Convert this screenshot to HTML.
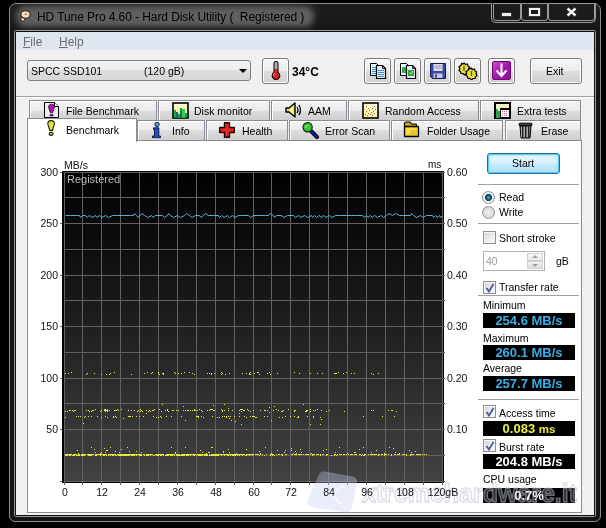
<!DOCTYPE html>
<html><head><meta charset="utf-8">
<style>
*{margin:0;padding:0;box-sizing:border-box}
html,body{width:606px;height:528px;overflow:hidden;background:#000}
body{position:relative;font-family:"Liberation Sans",sans-serif;font-size:11px;color:#000}
.a{position:absolute}
.t{position:absolute;white-space:nowrap;line-height:1;will-change:transform}
#frame{left:9px;top:3px;width:592px;height:519px;border:1px solid #8e8e8e;border-radius:7px 7px 6px 6px;background:linear-gradient(#1e1e1e 0px,#1a1a1a 14px,#161616 28px,#141414 60px)}
#glow{left:16px;top:6px;width:298px;height:21px;border-radius:9px;background:#606060;filter:blur(3px)}
#cap{left:491px;top:3px;width:105px;height:20px;border:1px solid #9a9a9a;border-top:none;border-radius:0 0 5px 5px;background:#1c1c1c}
#client1{left:14px;top:30px;width:582px;height:487px;border:1px solid #9a9a9a;border-radius:2px}
#client2{left:15px;top:31px;width:580px;height:485px;border:1px solid #0e0e0e;background:#f0f0f0}
#menu{left:16px;top:32px;width:578px;height:18px;background:#dfe6ef}
.btn{position:absolute;width:27px;height:26px;border:1px solid #7c7c7c;border-radius:3px;background:linear-gradient(#f6f6f6 0%,#ebebeb 48%,#dddddd 52%,#d0d0d0 100%);box-shadow:inset 0 0 0 1px #fcfcfc}
.tab{position:absolute;height:20px;border:1px solid #898c95;border-bottom:none;background:linear-gradient(#f2f2f2 0%,#ebebeb 50%,#dddddd 50%,#cfcfcf 100%);box-shadow:inset 1px 1px 0 #fff}
.tab span{position:absolute;top:5px;white-space:nowrap;line-height:1;font-size:10.5px;will-change:transform}
.lab{position:absolute;white-space:nowrap;line-height:1;font-size:10.5px;color:#111;margin-top:-1px;z-index:3;will-change:transform}
.vbox{position:absolute;left:483px;width:92px;height:15px;background:#000;font-weight:bold;font-size:13px;line-height:16px;text-align:center;white-space:nowrap;will-change:transform}
.chk{position:absolute;left:483px;width:13px;height:13px;border:1px solid #8e8f8f;background:linear-gradient(135deg,#d0d0d0,#f4f4f4 70%,#fff);box-shadow:inset 0 0 0 1px #f4f4f4}
.sep{position:absolute;left:478px;width:101px;height:2px;border-top:1px solid #a0a0a0;border-bottom:1px solid #fff}
</style></head><body>
<div id="frame" class="a"></div>
<div id="glow" class="a"></div>
<!-- app icon -->
<svg class="a" style="left:18px;top:9px" width="14" height="14"><path d="M3.5 8L2.5 11L5.5 12.5L7.5 9.5Z" fill="#e8dcc8" stroke="#2a2010" stroke-width="1"/><ellipse cx="7.5" cy="5.5" rx="4.6" ry="3.8" fill="#f2e2c2" stroke="#2a2010" stroke-width="1.1"/><ellipse cx="7.8" cy="5.2" rx="1.5" ry="1" fill="#b89860"/></svg>
<div class="t" style="left:37px;top:11px;font-size:12px;color:#000;letter-spacing:-0.08px">HD Tune Pro 4.60 - Hard Disk Utility (&nbsp; Registered )</div>
<div id="cap" class="a"></div>
<div class="a" style="left:493px;top:3px;width:28px;height:18px;border:1px solid #9a9a9a;border-radius:0 0 3px 3px"></div>
<div class="a" style="left:521px;top:3px;width:27px;height:18px;border:1px solid #9a9a9a;border-radius:0 0 3px 3px"></div>
<div class="a" style="left:548px;top:3px;width:47px;height:18px;border:1px solid #9a9a9a;border-radius:0 0 3px 3px"></div>
<div class="a" style="left:501px;top:12px;width:11px;height:5px;background:#f0f0f0;border:1px solid #333"></div>
<div class="a" style="left:529px;top:8px;width:11px;height:8px;border:2px solid #f0f0f0;outline:1px solid #333"></div>
<svg class="a" style="left:565px;top:7px" width="13" height="10"><path d="M2 1L11 9M11 1L2 9" stroke="#222" stroke-width="4.2"/><path d="M2.5 1.5L10.5 8.5M10.5 1.5L2.5 8.5" stroke="#f4f4f4" stroke-width="2.4"/></svg>

<div id="client1" class="a"></div>
<div id="client2" class="a"></div>
<div id="menu" class="a"></div>
<div class="t" style="left:23px;top:36px;font-size:12px;color:#6e6e6e"><u>F</u>ile</div>
<div class="t" style="left:59px;top:36px;font-size:12px;color:#6e6e6e"><u>H</u>elp</div>

<!-- combo -->
<div class="a" style="left:27px;top:60px;width:224px;height:21px;border:1px solid #7e7e7e;border-radius:3px;background:linear-gradient(#f3f3f3 0%,#ececec 50%,#dedede 50%,#d6d6d6 100%)"></div>
<div class="t" style="left:31px;top:66px;font-size:10.5px">SPCC SSD101</div>
<div class="t" style="left:144px;top:66px;font-size:10.5px">(120 gB)</div>
<div class="a" style="left:239px;top:69px;width:0;height:0;border-left:4px solid transparent;border-right:4px solid transparent;border-top:4px solid #000"></div>

<!-- thermometer button -->
<div class="btn" style="left:262px;top:58px"></div>
<svg class="a" style="left:270px;top:61px" width="12" height="19">
<path d="M4 2.5A2 2 0 0 1 8 2.5V11.5A3.8 3.8 0 1 1 4 11.5Z" fill="#d02828" stroke="#200" stroke-width="1.1"/>
<path d="M4.6 2.5A1.4 1.4 0 0 1 7.4 2.5V8H4.6Z" fill="#8ab8b0"/>
<path d="M3.5 14.5Q3.5 12.5 5 12" stroke="#ffb0b0" stroke-width="1" fill="none"/>
</svg>
<div class="t" style="left:292px;top:66px;font-size:12px;font-weight:bold">34°C</div>

<!-- toolbar buttons -->
<div class="btn" style="left:364px;top:58px"></div>
<div class="btn" style="left:394px;top:58px"></div>
<div class="btn" style="left:424px;top:58px"></div>
<div class="btn" style="left:454px;top:58px"></div>
<div class="btn" style="left:488px;top:58px"></div>
<!-- icon 1 docs -->
<svg class="a" style="left:369px;top:62px" width="18" height="17">
<path d="M1.5 1.5H7.5L9.5 3.5V13.5H1.5Z" fill="#eef6ff" stroke="#000"/>
<path d="M3 5.5H8M3 7.5H8M3 9.5H8M3 11.5H8" stroke="#3a8ad8" stroke-width="1"/>
<path d="M7.5 3.5H13.5L16.5 6.5V16.5H7.5Z" fill="#e4f0fc" stroke="#000" stroke-width="1.2"/>
<path d="M13.5 3.5V6.5H16.5" fill="none" stroke="#000" stroke-width="0.8"/>
<path d="M9 8.5H15M9 10.5H15M9 12.5H15M9 14.5H15" stroke="#3a8ad8" stroke-width="1"/>
</svg>
<!-- icon 2 -->
<svg class="a" style="left:399px;top:62px" width="18" height="17">
<path d="M1.5 1.5H7.5L9.5 3.5V13.5H1.5Z" fill="#eef6ff" stroke="#000"/>
<rect x="3" y="5" width="5" height="6" fill="#3aa850"/>
<path d="M7.5 3.5H13.5L16.5 6.5V16.5H7.5Z" fill="#e4f0fc" stroke="#000" stroke-width="1.2"/>
<path d="M13.5 3.5V6.5H16.5" fill="none" stroke="#000" stroke-width="0.8"/>
<rect x="9" y="8" width="6" height="6" fill="#38a048"/>
<path d="M10.5 10.5L12 12L14 9" stroke="#b0f060" stroke-width="1" fill="none"/>
</svg>
<!-- icon 3 floppy -->
<svg class="a" style="left:430px;top:63px" width="16" height="16">
<path d="M0.5 0.5H15.5V15.5H2.5L0.5 13.5Z" fill="#3a48a8" stroke="#101850"/>
<rect x="3.5" y="1" width="9" height="7" fill="#dcdce8"/>
<path d="M4.5 3H11.5M4.5 5H11.5" stroke="#9a9ab0" stroke-width="1"/>
<rect x="3.5" y="10.5" width="9" height="4.5" fill="#c8c8d8"/>
<rect x="5" y="11.5" width="2" height="3" fill="#3a48a8"/>
</svg>
<!-- icon 4 gears -->
<svg class="a" style="left:458px;top:62px" width="20" height="18">
<g stroke="#000" stroke-width="1.2" fill="#e8e040">
<path d="M6 1L7.5 2.5L9.5 2L10 4L11.5 5L11 7L12 8.5L10.5 10L10 11.5L8 11.5L6.5 13L5 11.5L3 11.5L2.5 9.5L1 8.5L1.8 6.5L1 4.5L3 3.5L3.5 1.5L5 2Z"/>
<path d="M13 6L14.5 7.5L16.5 7L17 9L18.5 10L18 12L19 13.5L17.5 15L17 16.5L15 16.5L13.5 18L12 16.5L10 16.5L9.5 14.5L8 13.5L8.8 11.5L8 9.5L10 8.5L10.5 6.5L12 7Z"/>
</g>
<path d="M6 4V9M13.5 9V14" stroke="#5a5a10" stroke-width="1.4"/>
</svg>
<!-- icon 5 purple -->
<svg class="a" style="left:491px;top:60px" width="21" height="21">
<defs><linearGradient id="pg" x1="0" y1="0" x2="1" y2="1"><stop offset="0" stop-color="#d050d0"/><stop offset="0.5" stop-color="#a818b0"/><stop offset="1" stop-color="#8a0a98"/></linearGradient></defs>
<rect x="1.5" y="1.5" width="18" height="18" rx="1.5" fill="url(#pg)" stroke="#6a0a70"/>
<path d="M10.5 3.5V16M5.5 10.5L10.5 16L15.5 10.5" stroke="#fff" stroke-width="2" fill="none"/>
</svg>
<!-- exit -->
<div class="btn" style="left:530px;top:58px;width:52px"></div>
<div class="t" style="left:546px;top:66px;font-size:10.5px">Exit</div>

<!-- separator -->
<div class="a" style="left:16px;top:96px;width:578px;height:1px;background:#a0a0a0"></div>
<div class="a" style="left:16px;top:97px;width:578px;height:1px;background:#fff"></div>

<!-- back row tabs -->
<div class="tab" style="left:29px;top:100px;width:128px"><span style="left:36px">File Benchmark</span></div>
<div class="tab" style="left:158px;top:100px;width:112px"><span style="left:35px">Disk monitor</span></div>
<div class="tab" style="left:271px;top:100px;width:76px"><span style="left:36px">AAM</span></div>
<div class="tab" style="left:348px;top:100px;width:131px"><span style="left:36px">Random Access</span></div>
<div class="tab" style="left:480px;top:100px;width:101px"><span style="left:36px">Extra tests</span></div>
<!-- back icons -->
<svg class="a" style="left:44px;top:102px" width="16" height="17"><path d="M0.5 0.5H10.5L14.5 4.5V15.5H0.5Z" fill="#f3eef6" stroke="#000"/><path d="M10.5 0.5V4.5H14.5" fill="#fff" stroke="#000"/><path d="M7.5 2.2C5.4 2.2 4.3 3.6 4.7 5.6L6.4 10.8H8.6L10.3 5.6C10.7 3.6 9.6 2.2 7.5 2.2Z" fill="#a81ca8" stroke="#3a0a3a" stroke-width="0.9"/><ellipse cx="7.5" cy="13.2" rx="2" ry="1.3" fill="#3a2a5a"/></svg>
<svg class="a" style="left:172px;top:102px" width="17" height="17"><defs><linearGradient id="dm" x1="0" y1="0" x2="0" y2="1"><stop offset="0" stop-color="#fffde0"/><stop offset="0.5" stop-color="#f4eea0"/></linearGradient></defs><rect x="1" y="1" width="15" height="15" fill="url(#dm)" stroke="#000" stroke-width="1.6"/><path d="M2 15.5V8H4V10H6V12H8V6H10V9H11V7H13V11H15V15.5Z" fill="#22a050"/><path d="M4 15.5V10H6V15.5ZM8 15.5V9H10V15.5Z" fill="#107060"/><path d="M10 15.5V7H13V15.5Z" fill="#30d050"/></svg>
<svg class="a" style="left:285px;top:102px" width="17" height="16"><path d="M1 6H4L10 1V15L4 10H1Z" fill="#f0e050" stroke="#000" stroke-width="1.4" stroke-linejoin="round"/><path d="M12 5Q14 8 12 11M14 3Q17 8 14 13" fill="none" stroke="#000" stroke-width="1.3"/><path d="M5 7L8 4V12L5 9Z" fill="#fff8a0"/></svg>
<svg class="a" style="left:362px;top:102px" width="17" height="17"><defs><linearGradient id="ra" x1="0" y1="1" x2="1" y2="0"><stop offset="0" stop-color="#f6ee98"/><stop offset="1" stop-color="#fffef0"/></linearGradient></defs><rect x="1" y="1" width="15" height="15" fill="url(#ra)" stroke="#000" stroke-width="1.6"/><g fill="#8a6a20"><rect x="3" y="12" width="1" height="1"/><rect x="4" y="9" width="1" height="1"/><rect x="5" y="13" width="1" height="1"/><rect x="6" y="11" width="1" height="1"/><rect x="7" y="8" width="1" height="1"/><rect x="8" y="12" width="1" height="1"/><rect x="9" y="10" width="1" height="1"/><rect x="10" y="6" width="1" height="1"/><rect x="11" y="9" width="1" height="1"/><rect x="12" y="4" width="1" height="1"/><rect x="13" y="7" width="1" height="1"/><rect x="12" y="11" width="1" height="1"/><rect x="6" y="6" width="1" height="1"/><rect x="10" y="13" width="1" height="1"/><rect x="4" y="4" width="1" height="1"/></g></svg>
<svg class="a" style="left:494px;top:102px" width="17" height="17"><rect x="1" y="1" width="15" height="15" fill="#f6f2c0" stroke="#000" stroke-width="2"/><path d="M2 16V7H4V9H6V16Z" fill="#2aa050"/><rect x="6.5" y="6.5" width="9" height="9" fill="#fff" stroke="#000"/><rect x="6" y="6" width="10" height="2" fill="#000"/><g fill="#c06080"><rect x="8" y="9" width="1" height="1"/><rect x="10" y="9" width="1" height="1"/><rect x="12" y="9" width="1" height="1"/><rect x="8" y="11" width="1" height="1"/><rect x="10" y="11" width="1" height="1"/><rect x="12" y="11" width="1" height="1"/><rect x="8" y="13" width="1" height="1"/><rect x="10" y="13" width="1" height="1"/><rect x="12" y="13" width="1" height="1"/></g></svg>

<!-- panel -->
<div class="a" style="left:27px;top:140px;width:555px;height:373px;background:#fff;border:1px solid #898c95"></div>

<!-- front row tabs -->
<div class="tab" style="left:137px;top:120px;width:68px;height:20px"><span style="left:34px">Info</span></div>
<div class="tab" style="left:206px;top:120px;width:82px;height:20px"><span style="left:35px">Health</span></div>
<div class="tab" style="left:289px;top:120px;width:101px;height:20px"><span style="left:35px">Error Scan</span></div>
<div class="tab" style="left:391px;top:120px;width:112px;height:20px"><span style="left:35px">Folder Usage</span></div>
<div class="tab" style="left:505px;top:120px;width:76px;height:20px"><span style="left:35px">Erase</span></div>
<div class="tab" style="left:27px;top:118px;width:110px;height:24px;background:#fff;box-shadow:none"><span style="left:37.5px;top:6px">Benchmark</span></div>
<!-- front icons -->
<svg class="a" style="left:47px;top:120px" width="9" height="17"><path d="M4.1 0.6C1.6 0.6 0.5 2.2 0.9 4.4L2.8 10.4H5.4L7.3 4.4C7.7 2.2 6.6 0.6 4.1 0.6Z" fill="#e2e040" stroke="#1a1a00" stroke-width="1.1"/><ellipse cx="4.1" cy="13.9" rx="2.1" ry="1.8" fill="#9aa060" stroke="#1a1a00" stroke-width="1"/></svg>
<svg class="a" style="left:152px;top:122px" width="10" height="17"><circle cx="5" cy="2.4" r="2.2" fill="#5aa0e0" stroke="#001040" stroke-width="0.9"/><path d="M1.5 5.8H6.8V14H8.5V15.6H0.5V14H2.5V7.6H1.5Z" fill="#2050c8" stroke="#001040" stroke-width="0.9"/></svg>
<svg class="a" style="left:219px;top:122px" width="17" height="17"><path d="M5.5 0.7H10.5V5.5H15.3V10.5H10.5V15.3H5.5V10.5H0.7V5.5H5.5Z" fill="#e02828" stroke="#200000" stroke-width="1.4" stroke-linejoin="round"/></svg>
<svg class="a" style="left:302px;top:122px" width="17" height="17"><path d="M9 9L15 15" stroke="#000" stroke-width="4" stroke-linecap="round"/><path d="M9 9L15 15" stroke="#1a1aa0" stroke-width="2.4" stroke-linecap="round"/><circle cx="5.6" cy="5.2" r="4.6" fill="#40c040" stroke="#003000" stroke-width="1.2"/><path d="M3 6L6 3" stroke="#a0f0a0" stroke-width="1"/></svg>
<svg class="a" style="left:403px;top:121px" width="17" height="17"><path d="M1.5 2.5Q1.5 1 3 1H7L8.5 3H12.5Q13.5 3 13.5 4V6H1.5Z" fill="#c8a818" stroke="#000" stroke-width="1.2" stroke-linejoin="round"/><path d="M1.5 5.5H14.5Q15.5 5.5 15.5 6.5V15.5H1.5Z" fill="#e8c828" stroke="#000" stroke-width="1.3" stroke-linejoin="round"/><path d="M3 7H14V14H3Z" fill="#f4dc48"/><path d="M9 9H14V14H6Z" fill="#d8b420" opacity="0.6"/></svg>
<svg class="a" style="left:518px;top:122px" width="15" height="17"><rect x="1" y="1.2" width="13" height="2.5" rx="1" fill="#444" stroke="#000"/><path d="M2 4H13L12 16H3Z" fill="#777" stroke="#000"/><path d="M4.5 5V15M7.5 5V15M10.5 5V15" stroke="#222" stroke-width="1.2"/><path d="M3.5 5V15M6.5 5V15M9.5 5V15" stroke="#bbb" stroke-width="0.8"/></svg>

<!-- chart -->
<svg width="410" height="335" style="position:absolute;left:50px;top:160px"><g transform="translate(-50,-160)">
<defs><linearGradient id="cg" x1="0" y1="0" x2="0" y2="1"><stop offset="0" stop-color="#020202"/><stop offset="0.3" stop-color="#111"/><stop offset="1" stop-color="#424242"/></linearGradient></defs>
<rect x="62" y="171" width="382" height="312" fill="#000"/>
<rect x="64" y="172" width="378" height="309" fill="url(#cg)"/>
<path d="M64.5 172V485M82.5 172V485M101.5 172V485M120.5 172V485M139.5 172V485M158.5 172V485M177.5 172V485M196.5 172V485M215.5 172V485M234.5 172V485M253.5 172V485M271.5 172V485M290.5 172V485M309.5 172V485M328.5 172V485M347.5 172V485M366.5 172V485M385.5 172V485M404.5 172V485M423.5 172V485M442.5 172V485M64 172.5H445M64 197.5H445M64 223.5H445M64 249.5H445M64 275.5H445M64 300.5H445M64 326.5H445M64 352.5H445M64 378.5H445M64 403.5H445M64 429.5H445M64 455.5H445M64 481.5H445M60 172.5H62M60 223.5H62M60 275.5H62M60 326.5H62M60 378.5H62M60 429.5H62M60 481.5H62" stroke="#626262" stroke-width="1" fill="none"/>
<polyline points="65.5,215.5 70.5,215.5 76.5,215.5 79.5,215.5 80.5,217.5 82.5,215.5 85.5,215.5 87.0,217.5 89.5,215.5 92.0,217.5 95.5,215.5 97.0,217.5 99.5,215.5 102.0,217.5 105.5,215.5 108.5,217.5 112.5,215.5 116.5,215.5 123.5,215.5 130.5,215.5 133.5,215.5 134.5,213.5 136.5,215.5 138.0,217.5 140.5,215.5 142.0,213.5 144.5,215.5 147.5,217.5 151.5,215.5 153.0,217.5 155.5,215.5 162.5,215.5 164.5,217.5 167.5,215.5 168.5,213.5 170.5,215.5 173.5,217.5 177.5,215.5 180.5,217.5 184.5,215.5 186.5,213.5 189.5,215.5 192.0,217.5 195.5,215.5 199.5,215.5 201.0,217.5 203.5,215.5 205.5,213.5 208.5,215.5 213.5,215.5 218.5,215.5 219.5,217.5 221.5,215.5 224.0,217.5 227.5,215.5 229.5,217.5 232.5,215.5 235.0,217.5 238.5,215.5 241.5,215.5 248.5,215.5 250.5,217.5 253.5,215.5 258.5,215.5 265.5,215.5 268.5,215.5 270.5,213.5 273.5,215.5 274.5,217.5 276.5,215.5 281.5,215.5 284.0,217.5 287.5,215.5 293.5,215.5 295.5,217.5 298.5,215.5 301.0,217.5 304.5,215.5 307.5,217.5 311.5,215.5 312.5,217.5 314.5,215.5 316.5,217.5 319.5,215.5 321.0,217.5 323.5,215.5 326.0,217.5 329.5,215.5 332.0,217.5 335.5,215.5 340.5,215.5 346.5,215.5 351.5,215.5 356.5,215.5 362.5,215.5 364.0,217.5 366.5,215.5 368.0,217.5 370.5,215.5 372.0,217.5 374.5,215.5 377.5,217.5 381.5,215.5 383.5,217.5 386.5,215.5 389.0,213.5 392.5,215.5 395.5,213.5 399.5,215.5 403.5,215.5 410.5,215.5 411.5,213.5 413.5,215.5 416.5,217.5 420.5,215.5 423.0,217.5 426.5,215.5 432.5,215.5 433.5,217.5 435.5,215.5 437.0,217.5 439.5,215.5 440.5,217.5 442.5,215.5" fill="none" stroke="#58b0dc" stroke-width="1"/>
<path d="M65 454h1v1h-1zM65 455h1v1h-1zM66 454h1v1h-1zM66 455h1v1h-1zM67 454h1v1h-1zM67 455h1v1h-1zM68 454h1v1h-1zM69 454h1v1h-1zM69 455h1v1h-1zM70 454h1v1h-1zM70 455h1v1h-1zM71 454h1v1h-1zM72 455h1v1h-1zM73 454h1v1h-1zM73 455h1v1h-1zM74 454h1v1h-1zM74 455h1v1h-1zM75 454h1v1h-1zM76 454h1v1h-1zM76 455h1v1h-1zM77 455h1v1h-1zM78 454h1v1h-1zM78 455h1v1h-1zM79 454h1v1h-1zM79 455h1v1h-1zM81 454h1v1h-1zM81 455h1v1h-1zM82 454h1v1h-1zM82 455h1v1h-1zM83 454h1v1h-1zM83 455h1v1h-1zM84 454h1v1h-1zM84 455h1v1h-1zM85 454h1v1h-1zM87 454h1v1h-1zM88 454h1v1h-1zM88 455h1v1h-1zM89 454h1v1h-1zM89 455h1v1h-1zM90 454h1v1h-1zM90 455h1v1h-1zM91 454h1v1h-1zM91 455h1v1h-1zM92 454h1v1h-1zM93 454h1v1h-1zM95 454h1v1h-1zM95 455h1v1h-1zM96 454h1v1h-1zM96 455h1v1h-1zM97 454h1v1h-1zM98 454h1v1h-1zM99 454h1v1h-1zM100 454h1v1h-1zM100 455h1v1h-1zM101 454h1v1h-1zM102 454h1v1h-1zM103 454h1v1h-1zM103 455h1v1h-1zM104 454h1v1h-1zM104 455h1v1h-1zM105 454h1v1h-1zM106 454h1v1h-1zM106 455h1v1h-1zM108 454h1v1h-1zM108 455h1v1h-1zM109 454h1v1h-1zM110 454h1v1h-1zM110 455h1v1h-1zM111 454h1v1h-1zM112 454h1v1h-1zM112 455h1v1h-1zM113 454h1v1h-1zM113 455h1v1h-1zM114 454h1v1h-1zM115 454h1v1h-1zM115 455h1v1h-1zM116 455h1v1h-1zM117 454h1v1h-1zM118 454h1v1h-1zM118 455h1v1h-1zM119 454h1v1h-1zM119 455h1v1h-1zM120 454h1v1h-1zM120 455h1v1h-1zM121 454h1v1h-1zM121 455h1v1h-1zM122 454h1v1h-1zM122 455h1v1h-1zM123 454h1v1h-1zM123 455h1v1h-1zM124 454h1v1h-1zM124 455h1v1h-1zM125 454h1v1h-1zM125 455h1v1h-1zM126 454h1v1h-1zM126 455h1v1h-1zM127 454h1v1h-1zM127 455h1v1h-1zM128 454h1v1h-1zM128 455h1v1h-1zM129 454h1v1h-1zM129 455h1v1h-1zM130 454h1v1h-1zM131 454h1v1h-1zM131 455h1v1h-1zM132 454h1v1h-1zM132 455h1v1h-1zM133 454h1v1h-1zM133 455h1v1h-1zM134 454h1v1h-1zM134 455h1v1h-1zM135 454h1v1h-1zM136 454h1v1h-1zM136 455h1v1h-1zM137 454h1v1h-1zM138 454h1v1h-1zM139 454h1v1h-1zM139 455h1v1h-1zM140 454h1v1h-1zM140 455h1v1h-1zM141 454h1v1h-1zM141 455h1v1h-1zM143 454h1v1h-1zM144 454h1v1h-1zM144 455h1v1h-1zM146 454h1v1h-1zM146 455h1v1h-1zM147 454h1v1h-1zM147 455h1v1h-1zM148 454h1v1h-1zM148 455h1v1h-1zM149 454h1v1h-1zM150 454h1v1h-1zM150 455h1v1h-1zM151 454h1v1h-1zM152 454h1v1h-1zM153 455h1v1h-1zM154 455h1v1h-1zM155 454h1v1h-1zM156 454h1v1h-1zM156 455h1v1h-1zM157 454h1v1h-1zM157 455h1v1h-1zM158 454h1v1h-1zM158 455h1v1h-1zM159 454h1v1h-1zM160 454h1v1h-1zM160 455h1v1h-1zM161 454h1v1h-1zM161 455h1v1h-1zM162 454h1v1h-1zM163 454h1v1h-1zM163 455h1v1h-1zM165 455h1v1h-1zM166 454h1v1h-1zM166 455h1v1h-1zM167 454h1v1h-1zM167 455h1v1h-1zM168 454h1v1h-1zM168 455h1v1h-1zM169 454h1v1h-1zM170 454h1v1h-1zM170 455h1v1h-1zM171 454h1v1h-1zM171 455h1v1h-1zM172 454h1v1h-1zM172 455h1v1h-1zM173 454h1v1h-1zM174 454h1v1h-1zM174 455h1v1h-1zM176 454h1v1h-1zM176 455h1v1h-1zM177 454h1v1h-1zM177 455h1v1h-1zM178 454h1v1h-1zM178 455h1v1h-1zM179 454h1v1h-1zM179 455h1v1h-1zM180 455h1v1h-1zM181 454h1v1h-1zM181 455h1v1h-1zM182 454h1v1h-1zM182 455h1v1h-1zM183 454h1v1h-1zM183 455h1v1h-1zM184 454h1v1h-1zM184 455h1v1h-1zM185 454h1v1h-1zM186 454h1v1h-1zM186 455h1v1h-1zM187 454h1v1h-1zM187 455h1v1h-1zM188 454h1v1h-1zM188 455h1v1h-1zM189 454h1v1h-1zM190 454h1v1h-1zM190 455h1v1h-1zM191 454h1v1h-1zM192 454h1v1h-1zM193 454h1v1h-1zM193 455h1v1h-1zM194 454h1v1h-1zM194 455h1v1h-1zM195 454h1v1h-1zM196 455h1v1h-1zM197 454h1v1h-1zM198 454h1v1h-1zM198 455h1v1h-1zM199 454h1v1h-1zM199 455h1v1h-1zM200 454h1v1h-1zM200 455h1v1h-1zM201 454h1v1h-1zM201 455h1v1h-1zM202 454h1v1h-1zM202 455h1v1h-1zM203 454h1v1h-1zM204 454h1v1h-1zM204 455h1v1h-1zM205 454h1v1h-1zM205 455h1v1h-1zM206 454h1v1h-1zM206 455h1v1h-1zM207 454h1v1h-1zM207 455h1v1h-1zM209 454h1v1h-1zM209 455h1v1h-1zM210 455h1v1h-1zM211 454h1v1h-1zM211 455h1v1h-1zM212 454h1v1h-1zM212 455h1v1h-1zM213 454h1v1h-1zM213 455h1v1h-1zM214 454h1v1h-1zM214 455h1v1h-1zM215 454h1v1h-1zM215 455h1v1h-1zM216 454h1v1h-1zM216 455h1v1h-1zM217 454h1v1h-1zM217 455h1v1h-1zM218 454h1v1h-1zM218 455h1v1h-1zM219 454h1v1h-1zM220 454h1v1h-1zM221 454h1v1h-1zM221 455h1v1h-1zM222 454h1v1h-1zM223 454h1v1h-1zM224 454h1v1h-1zM224 455h1v1h-1zM225 454h1v1h-1zM226 454h1v1h-1zM227 454h1v1h-1zM227 455h1v1h-1zM228 454h1v1h-1zM228 455h1v1h-1zM229 454h1v1h-1zM230 454h1v1h-1zM230 455h1v1h-1zM231 454h1v1h-1zM232 454h1v1h-1zM232 455h1v1h-1zM233 454h1v1h-1zM233 455h1v1h-1zM234 454h1v1h-1zM234 455h1v1h-1zM235 454h1v1h-1zM235 455h1v1h-1zM236 454h1v1h-1zM237 454h1v1h-1zM237 455h1v1h-1zM238 454h1v1h-1zM239 454h1v1h-1zM239 455h1v1h-1zM240 454h1v1h-1zM241 454h1v1h-1zM242 454h1v1h-1zM242 455h1v1h-1zM243 454h1v1h-1zM244 454h1v1h-1zM245 455h1v1h-1zM246 454h1v1h-1zM246 455h1v1h-1zM247 454h1v1h-1zM248 454h1v1h-1zM249 454h1v1h-1zM249 455h1v1h-1zM250 454h1v1h-1zM251 454h1v1h-1zM252 454h1v1h-1zM252 455h1v1h-1zM253 454h1v1h-1zM255 454h1v1h-1zM256 454h1v1h-1zM257 454h1v1h-1zM258 454h1v1h-1zM259 455h1v1h-1zM260 454h1v1h-1zM262 454h1v1h-1zM264 455h1v1h-1zM266 454h1v1h-1zM270 454h1v1h-1zM270 455h1v1h-1zM271 454h1v1h-1zM272 454h1v1h-1zM272 455h1v1h-1zM273 454h1v1h-1zM274 455h1v1h-1zM276 454h1v1h-1zM278 454h1v1h-1zM279 454h1v1h-1zM281 454h1v1h-1zM282 454h1v1h-1zM282 455h1v1h-1zM285 454h1v1h-1zM286 454h1v1h-1zM291 454h1v1h-1zM292 454h1v1h-1zM294 454h1v1h-1zM295 454h1v1h-1zM296 454h1v1h-1zM298 454h1v1h-1zM299 454h1v1h-1zM300 454h1v1h-1zM301 454h1v1h-1zM303 454h1v1h-1zM305 454h1v1h-1zM306 454h1v1h-1zM307 454h1v1h-1zM308 454h1v1h-1zM310 454h1v1h-1zM312 454h1v1h-1zM312 455h1v1h-1zM313 454h1v1h-1zM314 454h1v1h-1zM316 454h1v1h-1zM317 454h1v1h-1zM318 454h1v1h-1zM320 454h1v1h-1zM320 455h1v1h-1zM322 454h1v1h-1zM323 454h1v1h-1zM326 454h1v1h-1zM326 455h1v1h-1zM327 454h1v1h-1zM331 455h1v1h-1zM334 454h1v1h-1zM334 455h1v1h-1zM335 454h1v1h-1zM336 455h1v1h-1zM337 454h1v1h-1zM339 454h1v1h-1zM340 454h1v1h-1zM341 454h1v1h-1zM343 454h1v1h-1zM344 454h1v1h-1zM346 454h1v1h-1zM348 454h1v1h-1zM350 454h1v1h-1zM351 454h1v1h-1zM352 454h1v1h-1zM354 454h1v1h-1zM355 454h1v1h-1zM356 454h1v1h-1zM359 454h1v1h-1zM360 454h1v1h-1zM361 455h1v1h-1zM362 454h1v1h-1zM363 455h1v1h-1zM364 454h1v1h-1zM364 455h1v1h-1zM365 454h1v1h-1zM368 454h1v1h-1zM370 454h1v1h-1zM371 454h1v1h-1zM372 454h1v1h-1zM373 454h1v1h-1zM374 454h1v1h-1zM375 454h1v1h-1zM376 454h1v1h-1zM378 454h1v1h-1zM378 455h1v1h-1zM379 454h1v1h-1zM381 454h1v1h-1zM382 454h1v1h-1zM384 454h1v1h-1zM384 455h1v1h-1zM385 454h1v1h-1zM386 454h1v1h-1zM388 454h1v1h-1zM391 454h1v1h-1zM391 455h1v1h-1zM394 454h1v1h-1zM395 454h1v1h-1zM397 454h1v1h-1zM398 454h1v1h-1zM399 454h1v1h-1zM402 454h1v1h-1zM403 454h1v1h-1zM404 454h1v1h-1zM406 454h1v1h-1zM406 455h1v1h-1zM410 454h1v1h-1zM410 455h1v1h-1zM411 454h1v1h-1zM412 454h1v1h-1zM413 454h1v1h-1zM416 454h1v1h-1zM417 454h1v1h-1zM418 454h1v1h-1zM419 454h1v1h-1zM420 454h1v1h-1zM422 454h1v1h-1zM424 454h1v1h-1zM426 454h1v1h-1zM355 452h1v1h-1zM389 447h1v1h-1zM376 450h1v1h-1zM106 450h1v1h-1zM277 450h1v1h-1zM395 452h1v1h-1zM246 449h1v1h-1zM223 451h1v1h-1zM339 447h1v1h-1zM101 452h1v1h-1zM141 452h1v1h-1zM185 447h1v1h-1zM136 451h1v1h-1zM77 450h1v1h-1zM354 452h1v1h-1zM209 452h1v1h-1zM129 451h1v1h-1zM91 447h1v1h-1zM347 453h1v1h-1zM236 453h1v1h-1zM100 453h1v1h-1zM300 449h1v1h-1zM291 448h1v1h-1zM296 453h1v1h-1zM311 453h1v1h-1zM415 451h1v1h-1zM212 447h1v1h-1zM175 452h1v1h-1zM211 447h1v1h-1zM371 452h1v1h-1zM293 453h1v1h-1zM323 450h1v1h-1zM399 453h1v1h-1zM384 453h1v1h-1zM104 448h1v1h-1zM208 452h1v1h-1zM228 449h1v1h-1zM110 447h1v1h-1zM260 453h1v1h-1zM95 452h1v1h-1zM326 449h1v1h-1zM115 451h1v1h-1zM121 449h1v1h-1zM393 448h1v1h-1zM200 450h1v1h-1zM171 447h1v1h-1zM411 452h1v1h-1zM175 453h1v1h-1zM94 449h1v1h-1zM291 450h1v1h-1zM285 450h1v1h-1zM359 449h1v1h-1zM265 447h1v1h-1zM206 453h1v1h-1zM119 452h1v1h-1zM107 450h1v1h-1zM409 450h1v1h-1zM78 453h1v1h-1zM363 447h1v1h-1zM301 452h1v1h-1zM105 452h1v1h-1zM259 451h1v1h-1zM295 451h1v1h-1zM271 453h1v1h-1zM202 452h1v1h-1zM223 452h1v1h-1zM127 447h1v1h-1zM284 452h1v1h-1zM229 452h1v1h-1zM335 452h1v1h-1zM279 417h1v1h-1zM167 410h1v1h-1zM97 416h1v1h-1zM158 417h1v1h-1zM194 410h1v1h-1zM74 410h1v1h-1zM85 416h1v1h-1zM264 410h1v1h-1zM78 416h1v1h-1zM232 410h1v1h-1zM70 410h1v1h-1zM321 410h1v1h-1zM113 417h1v1h-1zM138 410h1v1h-1zM241 411h1v1h-1zM80 416h1v1h-1zM221 409h1v1h-1zM104 409h1v1h-1zM297 417h1v1h-1zM101 417h1v1h-1zM117 409h1v1h-1zM222 411h1v1h-1zM146 410h1v1h-1zM115 416h1v1h-1zM105 409h1v1h-1zM239 416h1v1h-1zM107 409h1v1h-1zM93 410h1v1h-1zM228 416h1v1h-1zM313 417h1v1h-1zM207 410h1v1h-1zM129 416h1v1h-1zM254 416h1v1h-1zM132 416h1v1h-1zM212 416h1v1h-1zM149 410h1v1h-1zM178 410h1v1h-1zM222 410h1v1h-1zM140 409h1v1h-1zM143 416h1v1h-1zM253 410h1v1h-1zM121 409h1v1h-1zM222 416h1v1h-1zM171 416h1v1h-1zM295 410h1v1h-1zM190 410h1v1h-1zM69 410h1v1h-1zM210 409h1v1h-1zM91 416h1v1h-1zM201 416h1v1h-1zM214 410h1v1h-1zM116 417h1v1h-1zM104 410h1v1h-1zM305 411h1v1h-1zM246 417h1v1h-1zM88 410h1v1h-1zM288 409h1v1h-1zM167 409h1v1h-1zM313 410h1v1h-1zM230 416h1v1h-1zM217 417h1v1h-1zM219 417h1v1h-1zM128 410h1v1h-1zM75 410h1v1h-1zM168 411h1v1h-1zM105 410h1v1h-1zM67 411h1v1h-1zM100 411h1v1h-1zM197 416h1v1h-1zM273 410h1v1h-1zM195 410h1v1h-1zM141 410h1v1h-1zM320 417h1v1h-1zM248 410h1v1h-1zM160 416h1v1h-1zM256 417h1v1h-1zM84 417h1v1h-1zM109 410h1v1h-1zM131 410h1v1h-1zM95 409h1v1h-1zM247 409h1v1h-1zM228 416h1v1h-1zM240 409h1v1h-1zM140 411h1v1h-1zM86 410h1v1h-1zM107 411h1v1h-1zM281 411h1v1h-1zM307 416h1v1h-1zM113 416h1v1h-1zM148 411h1v1h-1zM161 417h1v1h-1zM185 410h1v1h-1zM285 416h1v1h-1zM310 411h1v1h-1zM211 409h1v1h-1zM267 416h1v1h-1zM224 410h1v1h-1zM209 410h1v1h-1zM101 410h1v1h-1zM92 410h1v1h-1zM152 410h1v1h-1zM244 410h1v1h-1zM74 410h1v1h-1zM243 410h1v1h-1zM80 416h1v1h-1zM115 410h1v1h-1zM290 416h1v1h-1zM91 411h1v1h-1zM116 410h1v1h-1zM72 410h1v1h-1zM276 409h1v1h-1zM187 410h1v1h-1zM89 411h1v1h-1zM139 416h1v1h-1zM173 410h1v1h-1zM154 409h1v1h-1zM76 416h1v1h-1zM298 417h1v1h-1zM283 410h1v1h-1zM267 410h1v1h-1zM176 410h1v1h-1zM153 410h1v1h-1zM202 411h1v1h-1zM248 410h1v1h-1zM212 409h1v1h-1zM107 410h1v1h-1zM199 409h1v1h-1zM260 410h1v1h-1zM65 417h1v1h-1zM88 410h1v1h-1zM313 416h1v1h-1zM310 409h1v1h-1zM213 410h1v1h-1zM137 411h1v1h-1zM306 411h1v1h-1zM192 410h1v1h-1zM306 410h1v1h-1zM190 410h1v1h-1zM226 416h1v1h-1zM88 416h1v1h-1zM294 410h1v1h-1zM172 410h1v1h-1zM159 409h1v1h-1zM131 410h1v1h-1zM161 411h1v1h-1zM307 410h1v1h-1zM201 410h1v1h-1zM153 416h1v1h-1zM198 417h1v1h-1zM234 416h1v1h-1zM107 417h1v1h-1zM241 409h1v1h-1zM213 410h1v1h-1zM150 411h1v1h-1zM194 409h1v1h-1zM141 410h1v1h-1zM250 411h1v1h-1zM250 416h1v1h-1zM105 416h1v1h-1zM310 409h1v1h-1zM315 410h1v1h-1zM106 410h1v1h-1zM114 410h1v1h-1zM317 409h1v1h-1zM253 416h1v1h-1zM134 410h1v1h-1zM228 410h1v1h-1zM136 416h1v1h-1zM183 410h1v1h-1zM166 416h1v1h-1zM242 409h1v1h-1zM183 410h1v1h-1zM130 416h1v1h-1zM65 411h1v1h-1zM298 416h1v1h-1zM244 416h1v1h-1zM282 411h1v1h-1zM239 410h1v1h-1zM181 416h1v1h-1zM131 410h1v1h-1zM294 411h1v1h-1zM265 410h1v1h-1zM128 416h1v1h-1zM188 410h1v1h-1zM224 416h1v1h-1zM197 410h1v1h-1zM294 416h1v1h-1zM264 416h1v1h-1zM278 410h1v1h-1zM73 411h1v1h-1zM105 411h1v1h-1zM197 410h1v1h-1zM282 417h1v1h-1zM203 417h1v1h-1zM196 416h1v1h-1zM198 416h1v1h-1zM255 417h1v1h-1zM118 410h1v1h-1zM165 410h1v1h-1zM252 416h1v1h-1zM228 408h1v1h-1zM162 404h1v1h-1zM83 423h1v1h-1zM226 417h1v1h-1zM213 405h1v1h-1zM142 411h1v1h-1zM310 424h1v1h-1zM320 424h1v1h-1zM183 406h1v1h-1zM303 404h1v1h-1zM269 407h1v1h-1zM229 418h1v1h-1zM274 406h1v1h-1zM235 421h1v1h-1zM269 412h1v1h-1zM321 419h1v1h-1zM231 420h1v1h-1zM185 420h1v1h-1zM123 418h1v1h-1zM241 424h1v1h-1zM239 413h1v1h-1zM271 420h1v1h-1zM156 417h1v1h-1zM146 413h1v1h-1zM224 404h1v1h-1zM391 410h1v1h-1zM394 416h1v1h-1zM326 411h1v1h-1zM392 410h1v1h-1zM363 416h1v1h-1zM371 410h1v1h-1zM373 410h1v1h-1zM396 411h1v1h-1zM344 411h1v1h-1zM329 410h1v1h-1zM388 410h1v1h-1zM382 416h1v1h-1zM249 373h1v1h-1zM277 373h1v1h-1zM207 373h1v1h-1zM221 374h1v1h-1zM110 373h1v1h-1zM189 372h1v1h-1zM222 373h1v1h-1zM194 374h1v1h-1zM162 373h1v1h-1zM175 373h1v1h-1zM178 373h1v1h-1zM229 373h1v1h-1zM181 373h1v1h-1zM101 374h1v1h-1zM174 372h1v1h-1zM221 372h1v1h-1zM152 372h1v1h-1zM299 373h1v1h-1zM106 374h1v1h-1zM214 373h1v1h-1zM68 373h1v1h-1zM225 374h1v1h-1zM254 373h1v1h-1zM184 372h1v1h-1zM242 373h1v1h-1zM71 372h1v1h-1zM211 374h1v1h-1zM86 374h1v1h-1zM144 373h1v1h-1zM131 374h1v1h-1zM163 373h1v1h-1zM259 374h1v1h-1zM147 372h1v1h-1zM159 374h1v1h-1zM270 374h1v1h-1zM294 372h1v1h-1zM250 374h1v1h-1zM109 374h1v1h-1zM94 373h1v1h-1zM249 373h1v1h-1zM158 372h1v1h-1zM192 373h1v1h-1zM158 373h1v1h-1zM65 373h1v1h-1zM257 372h1v1h-1zM207 373h1v1h-1zM250 372h1v1h-1zM209 373h1v1h-1zM114 372h1v1h-1zM211 373h1v1h-1zM87 373h1v1h-1zM269 372h1v1h-1zM246 373h1v1h-1zM151 373h1v1h-1zM249 374h1v1h-1zM267 373h1v1h-1zM163 374h1v1h-1zM68 373h1v1h-1zM181 373h1v1h-1zM258 372h1v1h-1zM346 372h1v1h-1zM335 373h1v1h-1zM354 373h1v1h-1zM338 372h1v1h-1zM343 373h1v1h-1zM351 373h1v1h-1zM371 373h1v1h-1zM334 373h1v1h-1zM354 373h1v1h-1zM378 373h1v1h-1zM317 373h1v1h-1zM310 373h1v1h-1zM322 373h1v1h-1zM336 373h1v1h-1zM373 374h1v1h-1z" fill="#e8e830"/>
</g></svg>
<div class="lab" style="left:64px;top:161px">MB/s</div>
<div class="lab" style="left:428px;top:161px;font-size:10px">ms</div>
<div class="t" style="left:67px;top:174px;font-size:11px;color:#bcbcbc">Registered</div>

<!-- left axis labels -->
<div class="lab" style="left:40px;top:168px;width:18px;text-align:right">300</div>
<div class="lab" style="left:40px;top:219px;width:18px;text-align:right">250</div>
<div class="lab" style="left:40px;top:271px;width:18px;text-align:right">200</div>
<div class="lab" style="left:40px;top:322px;width:18px;text-align:right">150</div>
<div class="lab" style="left:40px;top:374px;width:18px;text-align:right">100</div>
<div class="lab" style="left:40px;top:425px;width:18px;text-align:right">50</div>
<div class="lab" style="left:447px;top:168px">0.60</div>
<div class="lab" style="left:447px;top:219px">0.50</div>
<div class="lab" style="left:447px;top:271px">0.40</div>
<div class="lab" style="left:447px;top:322px">0.30</div>
<div class="lab" style="left:447px;top:374px">0.20</div>
<div class="lab" style="left:447px;top:425px">0.10</div>

<!-- bottom labels -->
<div class="lab" style="left:34.5px;top:488px;width:60px;text-align:center">0</div>
<div class="lab" style="left:71.5px;top:488px;width:60px;text-align:center">12</div>
<div class="lab" style="left:109.5px;top:488px;width:60px;text-align:center">24</div>
<div class="lab" style="left:147.5px;top:488px;width:60px;text-align:center">36</div>
<div class="lab" style="left:185.5px;top:488px;width:60px;text-align:center">48</div>
<div class="lab" style="left:223.5px;top:488px;width:60px;text-align:center">60</div>
<div class="lab" style="left:260.5px;top:488px;width:60px;text-align:center">72</div>
<div class="lab" style="left:298.5px;top:488px;width:60px;text-align:center">84</div>
<div class="lab" style="left:336.5px;top:488px;width:60px;text-align:center">96</div>
<div class="lab" style="left:374.5px;top:488px;width:60px;text-align:center">108</div>
<div class="lab" style="left:412.5px;top:488px;width:60px;text-align:center">120gB</div>

<!-- right panel -->
<div class="a" style="left:487px;top:153px;width:73px;height:21px;border:1px solid #2c6a94;border-radius:3px;background:linear-gradient(#e8f7fe 0%,#d6f1fd 48%,#c4eafc 52%,#b4e2fa 100%);box-shadow:inset 0 0 0 1px #5ccaf4,inset 0 0 3px 1px #8ad8f8"></div>
<div class="t" style="left:512px;top:158px;font-size:10.5px">Start</div>
<div class="sep" style="top:184px"></div>
<div class="a" style="left:482px;top:191px;width:13px;height:13px;border-radius:50%;border:1px solid #8e8f8f;background:radial-gradient(circle at 50% 50%,#6ac0e0 0,#1e6a90 1.5px,#10405a 3.2px,#e4eef4 3.8px,#f4f4f4 5px)"></div>
<div class="t" style="left:499px;top:192px;font-size:10.5px">Read</div>
<div class="a" style="left:482px;top:206px;width:13px;height:13px;border-radius:50%;border:1px solid #8e8f8f;background:radial-gradient(circle,#f0f0f0,#d0d0d0)"></div>
<div class="t" style="left:499px;top:207px;font-size:10.5px">Write</div>
<div class="sep" style="top:223px"></div>
<div class="chk" style="top:231px"></div>
<div class="t" style="left:499px;top:233px;font-size:10.5px">Short stroke</div>
<div class="a" style="left:483px;top:251px;width:62px;height:20px;border:1px solid #b0b0b0;background:#fff"></div>
<div class="a" style="left:527px;top:253px;width:16px;height:8px;border:1px solid #d0d0d0;background:linear-gradient(#fafafa,#e8e8e8)"></div>
<div class="a" style="left:527px;top:261px;width:16px;height:8px;border:1px solid #d0d0d0;background:linear-gradient(#f0f0f0,#e0e0e0)"></div>
<div class="t" style="left:486px;top:256px;font-size:10.5px;color:#9a9a9a">40</div>
<div class="a" style="left:532px;top:255px;width:0;height:0;border-left:3px solid transparent;border-right:3px solid transparent;border-bottom:3px solid #a0a0a0"></div>
<div class="a" style="left:532px;top:264px;width:0;height:0;border-left:3px solid transparent;border-right:3px solid transparent;border-top:3px solid #a0a0a0"></div>
<div class="t" style="left:556px;top:256px;font-size:10.5px">gB</div>
<div class="chk" style="top:281px"></div>
<svg class="a" style="left:485px;top:283px" width="10" height="10"><path d="M1.5 5L4 8.5L8.5 1" stroke="#4a5a9a" stroke-width="1.8" fill="none"/></svg>
<div class="t" style="left:499px;top:282px;font-size:10.5px">Transfer rate</div>
<div class="sep" style="top:295px"></div>
<div class="t" style="left:483px;top:300px;font-size:10.5px">Minimum</div>
<div class="vbox" style="top:313px;color:#3aaee6">254.6 MB/s</div>
<div class="t" style="left:483px;top:333px;font-size:10.5px">Maximum</div>
<div class="vbox" style="top:345px;color:#3aaee6">260.1 MB/s</div>
<div class="t" style="left:483px;top:363px;font-size:10.5px">Average</div>
<div class="vbox" style="top:376px;color:#3aaee6">257.7 MB/s</div>
<div class="sep" style="top:399px"></div>
<div class="chk" style="top:405px"></div>
<svg class="a" style="left:485px;top:407px" width="10" height="10"><path d="M1.5 5L4 8.5L8.5 1" stroke="#4a5a9a" stroke-width="1.8" fill="none"/></svg>
<div class="t" style="left:499px;top:408px;font-size:10.5px">Access time</div>
<div class="vbox" style="top:421px;color:#eef040">0.083 <span style="font-size:11.5px">ms</span></div>
<div class="chk" style="top:439px"></div>
<svg class="a" style="left:485px;top:441px" width="10" height="10"><path d="M1.5 5L4 8.5L8.5 1" stroke="#4a5a9a" stroke-width="1.8" fill="none"/></svg>
<div class="t" style="left:499px;top:442px;font-size:10.5px">Burst rate</div>
<div class="vbox" style="top:454px;color:#fff">204.8 MB/s</div>
<div class="t" style="left:483px;top:474px;font-size:10.5px">CPU usage</div>
<div class="vbox" style="top:488px;color:#fff">0.7%</div>

<!-- watermark -->
<svg class="a" style="left:290px;top:455px" width="300" height="73"><g transform="translate(-290,-455)">
<g opacity="0.36"><path d="M324 477L351.5 482L346.5 507L313 501.5Z" fill="#c4ccf0" stroke="#c4ccf0" stroke-width="11" stroke-linejoin="round"/></g>
<path d="M343 486L327 495M331 494L340 503" fill="none" stroke="#fff" stroke-opacity="0.55" stroke-width="2.2" stroke-linecap="round"/>
<text x="362" y="502" font-family="Liberation Sans" font-weight="bold" font-size="26" textLength="215" lengthAdjust="spacingAndGlyphs" fill="#fff" fill-opacity="0.2" stroke="#b8bccb" stroke-opacity="0.5" stroke-width="1.4">xtremehardware.it</text>
</g></svg>
</body></html>
